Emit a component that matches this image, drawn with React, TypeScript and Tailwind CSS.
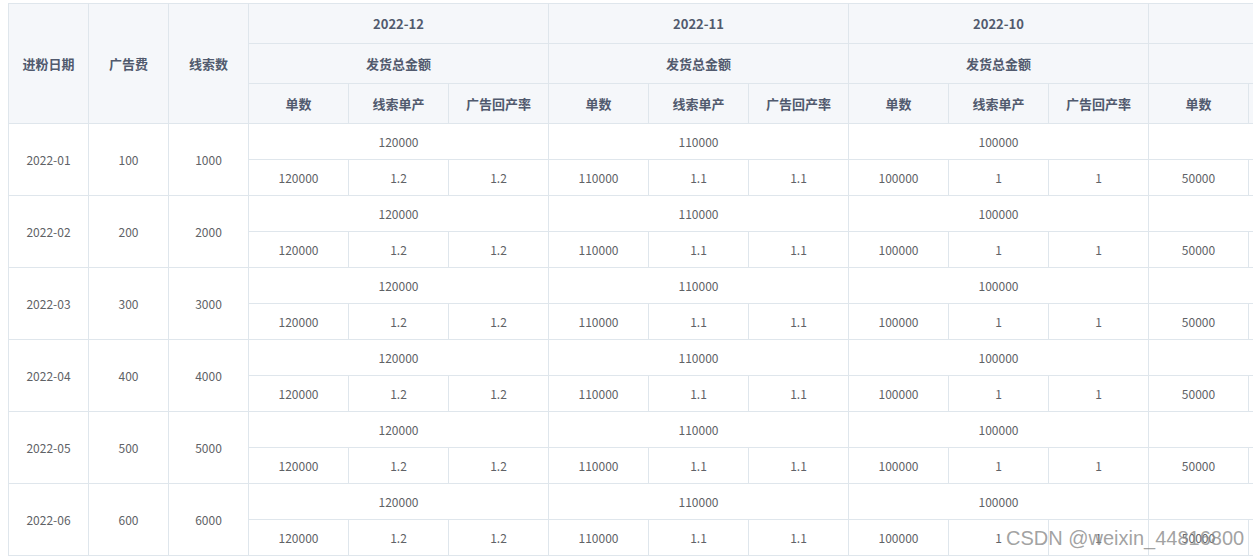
import React from 'react';

const months = ['2022-12', '2022-11', '2022-10', '2022-09'];
const vals = [
  { a: '120000', b: '1.2' },
  { a: '110000', b: '1.1' },
  { a: '100000', b: '1' },
  { a: '50000', b: '0.5' },
];
const rows = [1, 2, 3, 4, 5, 6];

const th = 'border border-[#dfe6ec] bg-[#f5f7fa] text-[13px] font-bold text-[#515a6e] text-center p-0';
const td = 'border border-[#dfe6ec] text-[12px] text-[#606266] text-center p-0';

export default function App() {
  return (
    <div className="relative w-[1253px] h-[557px] overflow-hidden bg-white pl-[8px] pt-[3px]" style={{ fontFamily: '"Noto Sans CJK SC", "Liberation Sans", sans-serif' }}>
      <table className="border-collapse table-fixed w-[1440px]">
        <colgroup>
          <col className="w-[80px]" />
          <col className="w-[80px]" />
          <col className="w-[80px]" />
          {Array.from({ length: 12 }).map((_, i) => <col key={i} className="w-[100px]" />)}
        </colgroup>
        <thead>
          <tr className="h-[40px]">
            <th rowSpan={3} className={th}>进粉日期</th>
            <th rowSpan={3} className={th}>广告费</th>
            <th rowSpan={3} className={th}>线索数</th>
            {months.map((m, i) => <th key={m} colSpan={3} className={th}>{i < 3 ? m : ''}</th>)}
          </tr>
          <tr className="h-[40px]">
            {months.map((m, i) => <th key={m} colSpan={3} className={th}>{i < 3 ? '发货总金额' : ''}</th>)}
          </tr>
          <tr className="h-[40px]">
            {months.map(m => (
              <React.Fragment key={m}>
                <th className={th}>单数</th>
                <th className={th}>线索单产</th>
                <th className={th}>广告回产率</th>
              </React.Fragment>
            ))}
          </tr>
        </thead>
        <tbody>
          {rows.map(r => (
            <React.Fragment key={r}>
              <tr className="h-[36px]">
                <td rowSpan={2} className={td}>2022-0{r}</td>
                <td rowSpan={2} className={td}>{r}00</td>
                <td rowSpan={2} className={td}>{r}000</td>
                {vals.map((v, i) => <td key={i} colSpan={3} className={td}>{i < 3 ? v.a : ''}</td>)}
              </tr>
              <tr className="h-[36px]">
                {vals.map((v, i) => (
                  <React.Fragment key={i}>
                    <td className={td}>{v.a}</td>
                    <td className={td}>{v.b}</td>
                    <td className={td}>{v.b}</td>
                  </React.Fragment>
                ))}
              </tr>
            </React.Fragment>
          ))}
        </tbody>
      </table>
      <div className="absolute left-[1006px] top-[528px] text-[20px] text-[#8a8a8a]/80 leading-none" style={{ fontFamily: '"Liberation Sans", sans-serif' }}>
        CSDN @weixin_44816800
      </div>
    </div>
  );
}
